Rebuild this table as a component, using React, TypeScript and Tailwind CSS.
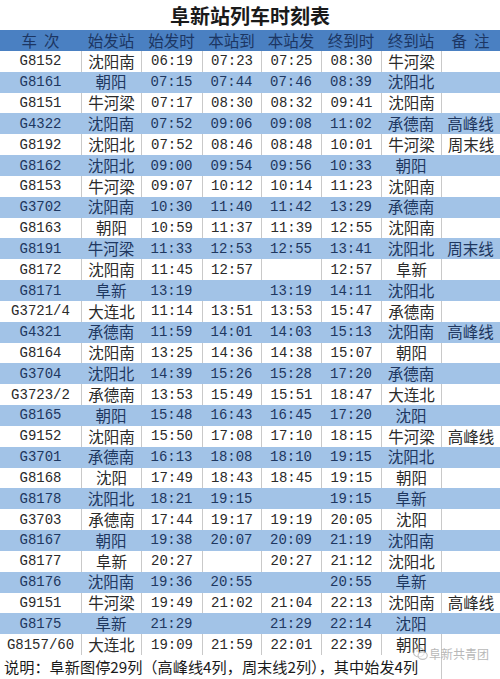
import React from "react";

type Row = [string, string, string, string, string, string, string, string];

const rows: Row[] = [
  ["G8152", "沈阳南", "06:19", "07:23", "07:25", "08:30", "牛河梁", ""],
  ["G8161", "朝阳", "07:15", "07:44", "07:46", "08:39", "沈阳北", ""],
  ["G8151", "牛河梁", "07:17", "08:30", "08:32", "09:41", "沈阳南", ""],
  ["G4322", "沈阳南", "07:52", "09:06", "09:08", "11:02", "承德南", "高峰线"],
  ["G8192", "沈阳北", "07:52", "08:46", "08:48", "10:01", "牛河梁", "周末线"],
  ["G8162", "沈阳北", "09:00", "09:54", "09:56", "10:33", "朝阳", ""],
  ["G8153", "牛河梁", "09:07", "10:12", "10:14", "11:23", "沈阳南", ""],
  ["G3702", "沈阳南", "10:30", "11:40", "11:42", "13:29", "承德南", ""],
  ["G8163", "朝阳", "10:59", "11:37", "11:39", "12:55", "沈阳南", ""],
  ["G8191", "牛河梁", "11:33", "12:53", "12:55", "13:41", "沈阳北", "周末线"],
  ["G8172", "沈阳南", "11:45", "12:57", "", "12:57", "阜新", ""],
  ["G8171", "阜新", "13:19", "", "13:19", "14:11", "沈阳北", ""],
  ["G3721/4", "大连北", "11:14", "13:51", "13:53", "15:47", "承德南", ""],
  ["G4321", "承德南", "11:59", "14:01", "14:03", "15:13", "沈阳南", "高峰线"],
  ["G8164", "沈阳南", "13:25", "14:36", "14:38", "15:07", "朝阳", ""],
  ["G3704", "沈阳北", "14:39", "15:26", "15:28", "17:20", "承德南", ""],
  ["G3723/2", "承德南", "13:53", "15:49", "15:51", "18:47", "大连北", ""],
  ["G8165", "朝阳", "15:48", "16:43", "16:45", "17:20", "沈阳", ""],
  ["G9152", "沈阳南", "15:50", "17:08", "17:10", "18:15", "牛河梁", "高峰线"],
  ["G3701", "承德南", "16:13", "18:08", "18:10", "19:15", "沈阳北", ""],
  ["G8168", "沈阳", "17:49", "18:43", "18:45", "19:15", "朝阳", ""],
  ["G8178", "沈阳北", "18:21", "19:15", "", "19:15", "阜新", ""],
  ["G3703", "承德南", "17:44", "19:17", "19:19", "20:05", "沈阳", ""],
  ["G8167", "朝阳", "19:38", "20:07", "20:09", "21:19", "沈阳南", ""],
  ["G8177", "阜新", "20:27", "", "20:27", "21:12", "沈阳北", ""],
  ["G8176", "沈阳南", "19:36", "20:55", "", "20:55", "阜新", ""],
  ["G9151", "牛河梁", "19:49", "21:02", "21:04", "22:13", "沈阳南", "高峰线"],
  ["G8175", "阜新", "21:29", "", "21:29", "22:14", "沈阳", ""],
  ["G8157/60", "大连北", "19:09", "21:59", "22:01", "22:39", "朝阳", ""],
];

const headers = ["车  次", "始发站", "始发时", "本站到", "本站发", "终到时", "终到站", "备  注"];

const cjkCols = [1, 6, 7];

const mono = { fontFamily: '"Liberation Mono", "Noto Sans CJK SC", monospace' };
const cjk = { fontFamily: '"Noto Sans CJK SC", "Noto Sans", sans-serif' };

export default function App() {
  return (
    <div className="relative w-[500px] h-[679px] overflow-hidden bg-white">
      <div
        className="h-[30px] flex items-center justify-center text-[20px] font-bold text-[#1a1a1a] leading-none pt-[2px]"
        style={cjk}
      >
        阜新站列车时刻表
      </div>
      <div className="grid grid-cols-[81px_60px_61px_59px_60px_60px_60px_59px]">
        {headers.map((h) => (
          <div
            key={h}
            className="h-[21px] bg-[#4a80c2] text-[#1c3663] text-[15.5px] flex items-center justify-center leading-none whitespace-pre"
            style={cjk}
          >
            {h}
          </div>
        ))}
        {rows.map((r, ri) => {
          const blue = ri % 2 === 1;
          return r.map((c, ci) => (
            <div
              key={ri + "-" + ci}
              className={
                "h-[20.83px] flex items-center justify-center leading-none whitespace-nowrap " +
                (blue
                  ? "bg-[#a2c3e7] text-[#1e3760] "
                  : "bg-white text-[#2a2a2a] " + (ci > 0 ? "border-l border-[#c9c9c9] " : "")) +
                (cjkCols.includes(ci) ? "text-[15.5px]" : "text-[14px]")
              }
              style={cjkCols.includes(ci) ? cjk : mono}
            >
              {c}
            </div>
          ));
        })}
      </div>
      <div className="grid grid-cols-[441px_59px] h-[24px]">
        <div
          className="flex items-center pl-[4px] text-[15.2px] text-[#1a1a1a] leading-none whitespace-nowrap"
          style={cjk}
        >
          说明：阜新图停29列（高峰线4列，周末线2列），其中始发4列
        </div>
        <div className="border-l border-[#c9c9c9]"></div>
      </div>
      <div className="absolute left-[413px] top-[647px] flex items-center gap-[1px] opacity-60">
        <svg width="15" height="14" viewBox="0 0 14 13">
          <ellipse cx="5.5" cy="5" rx="5" ry="4.2" fill="none" stroke="#9a9a9a" strokeWidth="1" />
          <ellipse cx="9" cy="8" rx="4.3" ry="3.5" fill="#fff" fillOpacity="0.6" stroke="#9a9a9a" strokeWidth="1" />
          <circle cx="3.8" cy="3.8" r="0.7" fill="#9a9a9a" />
          <circle cx="7" cy="3.8" r="0.7" fill="#9a9a9a" />
        </svg>
        <span className="text-[12px] text-[#8a8a8a] leading-none" style={cjk}>
          阜新共青团
        </span>
      </div>
    </div>
  );
}
